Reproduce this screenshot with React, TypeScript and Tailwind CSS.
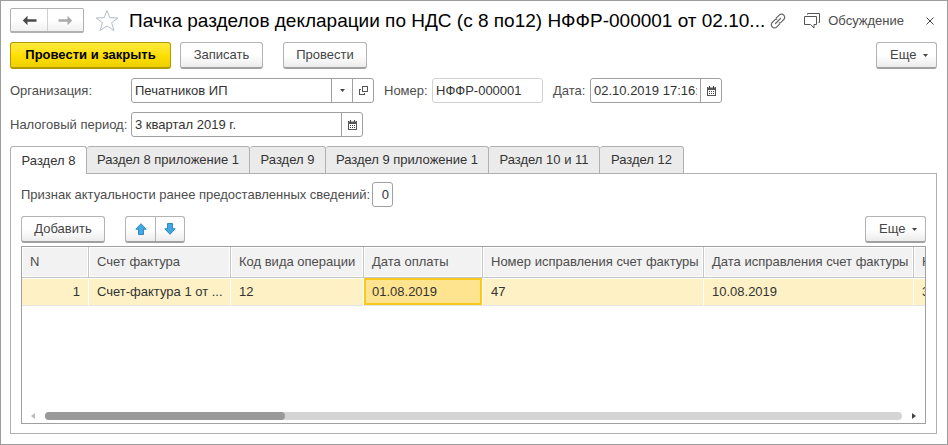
import { useState } from 'react';
import clsx from 'clsx';

type Column = {
  title: string;
  value: string;
  width: string;
};

const tabs = [
  { title: 'Раздел 8', width: 'w-[77px]' },
  { title: 'Раздел 8 приложение 1', width: 'w-[163px]' },
  { title: 'Раздел 9', width: 'w-[76px]' },
  { title: 'Раздел 9 приложение 1', width: 'w-[163px]' },
  { title: 'Раздел 10 и 11', width: 'w-[111px]' },
  { title: 'Раздел 12', width: 'w-[84px]' },
];

const columns: Column[] = [
  { title: 'N', value: '1', width: 'w-[67px]' },
  { title: 'Счет фактура', value: 'Счет-фактура 1 от ...', width: 'w-[142px]' },
  { title: 'Код вида операции', value: '12', width: 'w-[133px]' },
  { title: 'Дата оплаты', value: '01.08.2019', width: 'w-[119px]' },
  { title: 'Номер исправления счет фактуры', value: '47', width: 'w-[221px]' },
  { title: 'Дата исправления счет фактуры', value: '10.08.2019', width: 'w-[210px]' },
  { title: 'Н', value: '3', width: 'w-[120px]' },
];

const buttonClass =
  'h-[27px] rounded-[3px] border border-[#b3b3b3] border-b-2 border-b-[#a0a0a0] bg-linear-to-b from-white from-50% to-[#ececec] text-[#444] whitespace-nowrap';

const fieldClass = 'flex h-[25px] shrink-0 overflow-hidden rounded-[3px] border border-[#a0a0a0] bg-white';
const inputClass = 'min-w-0 flex-1 bg-transparent px-[3px] text-[#333] outline-none';
const fieldButtonClass = 'flex w-[21px] shrink-0 items-center justify-center border-l border-[#a0a0a0]';

const Caret = () => (
  <svg width="5" height="3" viewBox="0 0 5 3" fill="#444">
    <path d="M0 0h5L2.5 3z" />
  </svg>
);

const CalendarIcon = () => (
  <svg width="9" height="10" viewBox="0 0 9 10" shapeRendering="crispEdges">
    <path d="M0 1h9v9H0z" fill="#555" />
    <path d="M2 0h1v2H2zM6 0h1v2H6z" fill="#444" />
    <path d="M1 1h1v1H1zM3 1h3v1H3zM7 1h1v1H7z" fill="#aaa" />
    <path d="M1 4h7v5H1z" fill="#fff" />
    <path d="M2 5h1v1H2zM4 5h1v1H4zM6 5h1v1H6zM2 7h1v1H2zM4 7h1v1H4zM6 7h1v1H6z" fill="#444" />
  </svg>
);

const OpenIcon = () => (
  <svg width="9" height="9" viewBox="0 0 9 9" fill="#555" shapeRendering="crispEdges">
    <path d="M3 0h6v6H3zM4 1v4h4V1z" fillRule="evenodd" />
    <path d="M0 3h2v1H1v4h4V7h1v2H0z" />
  </svg>
);

const NavArrow = ({ back }: { back?: boolean }) => (
  <svg width="15" height="11" viewBox="0 0 15 11" className={back ? 'text-[#4a4a4a]' : 'rotate-180 text-[#aaa]'}>
    <path d="M5.500 .8L.8 5.500l4.700 4.700V6.800h9V4.200h-9z" fill="currentColor" />
  </svg>
);

const MoveArrow = ({ down }: { down?: boolean }) => (
  <svg width="12" height="12" viewBox="0 0 12 12" className={down ? 'rotate-180' : ''}>
    <path d="M6 .7l5.2 5.5H8.5v5.3h-5V6.2H.8z" fill="#3fa9e6" stroke="#3486bb" strokeLinejoin="round" />
  </svg>
);

const MoreButton = () => (
  <button type="button" className={clsx(buttonClass, 'ml-auto flex w-[61px] items-center gap-[7px] pl-[13px]')}>
    Еще
    <Caret />
  </button>
);

export default function App() {
  const [activeTab, setActiveTab] = useState(0);

  return (
    <main className="flex min-h-screen flex-col border border-[#9c9c9c] bg-white pt-[7px] pr-2.5 pb-2.5 pl-[9px] font-['Liberation_Sans',Arial,sans-serif] text-[13px] leading-4 text-[#4d4d4d]">
      <header className="flex h-[25px] items-center">
        <div className="flex h-[25px] shrink-0 rounded-[2px] border border-b-2 border-[#b0b0b0] bg-linear-to-b from-white from-50% to-[#f0f0f0]">
          <button type="button" aria-label="Назад" className="flex w-[36px] items-center justify-center">
            <NavArrow back />
          </button>
          <button type="button" aria-label="Вперед" className="flex w-[36px] items-center justify-center border-l border-[#d0d0d0]">
            <NavArrow />
          </button>
        </div>
        <button type="button" aria-label="В избранное" className="ml-[11px] shrink-0">
          <svg width="24" height="23" viewBox="0 0 24 23" fill="none" stroke="#b4bcc6">
            <path d="M12 1.5l2.8 7.2 8.2.3-6.4 4.7 2.4 7.8-7-4.5-7 4.5 2.4-7.8L1 9l8.2-.3z" />
          </svg>
        </button>
        <h1 className="ml-2.5 min-w-0 flex-1 text-[19px] leading-6 whitespace-nowrap text-black">
          Пачка разделов декларации по НДС (с 8 по12) НФФР-000001 от 02.10...
        </h1>
        <button type="button" aria-label="Получить ссылку" className="shrink-0">
          <svg width="16" height="16" viewBox="0 0 16 16" fill="none" stroke="#666" strokeWidth="1.2" strokeLinecap="round">
            <path d="M6.200 5.200l3-3a3 3 0 0 1 4.600 0 3 3 0 0 1 0 4.300l-2.600 2.600a3 3 0 0 1-2 .8" />
            <path d="M9.800 10.800l-3 3a3 3 0 0 1-4.600 0 3 3 0 0 1 0-4.300l2.600-2.600a3 3 0 0 1 2-.8" />
            <path d="M5.500 10.500l5-5" />
          </svg>
        </button>
        <a href="#discussion" className="ml-[18px] flex shrink-0 items-center gap-2">
          <svg width="16" height="16" viewBox="0 0 16 16" fill="none" stroke="#555">
            <path d="M3.500 1.500V.5h12v9h-1" />
            <path d="M.5 3.500h12v8H10v3.500l-3.500-3.500h-6z" />
          </svg>
          Обсуждение
        </a>
        <button type="button" aria-label="Закрыть" className="mr-[3px] ml-[22px] shrink-0">
          <svg width="8" height="8" viewBox="0 0 8 8" stroke="#444">
            <path d="M.5.5l7 7M7.5.5l-7 7" />
          </svg>
        </button>
      </header>

      <div className="mt-[9px] flex">
        <button
          type="button"
          className="h-[27px] w-[161px] rounded-[3px] border border-b-2 border-[#b09a00] bg-linear-to-b from-[#ffe93a] via-[#ffe000] to-[#efcf00] font-bold whitespace-nowrap text-black"
        >
          Провести и закрыть
        </button>
        <button type="button" className={clsx(buttonClass, 'ml-[9px] w-[83px]')}>
          Записать
        </button>
        <button type="button" className={clsx(buttonClass, 'ml-5 w-[84px]')}>
          Провести
        </button>
        <MoreButton />
      </div>

      <div className="mt-[9px] flex items-center">
        <label htmlFor="organization" className="w-[121px] shrink-0">
          Организация:
        </label>
        <div className={clsx(fieldClass, 'w-[243px]')}>
          <input id="organization" defaultValue="Печатников ИП" className={inputClass} />
          <button type="button" aria-label="Выбрать" className={fieldButtonClass}>
            <Caret />
          </button>
          <button type="button" aria-label="Открыть" className={fieldButtonClass}>
            <OpenIcon />
          </button>
        </div>
        <label htmlFor="number" className="ml-2.5 w-12 shrink-0">
          Номер:
        </label>
        <div className={clsx(fieldClass, 'w-[111px] border-[#d2d2d2]!')}>
          <input id="number" defaultValue="НФФР-000001" readOnly className={inputClass} />
        </div>
        <label htmlFor="date" className="ml-2.5 w-[37px] shrink-0">
          Дата:
        </label>
        <div className={clsx(fieldClass, 'w-[132px]')}>
          <input id="date" defaultValue="02.10.2019 17:16:" className={inputClass} />
          <button type="button" aria-label="Выбрать дату" className={fieldButtonClass}>
            <CalendarIcon />
          </button>
        </div>
      </div>

      <div className="mt-[9px] flex items-center">
        <label htmlFor="period" className="w-[121px] shrink-0 whitespace-nowrap">
          Налоговый период:
        </label>
        <div className={clsx(fieldClass, 'w-[232px]')}>
          <input id="period" defaultValue="3 квартал 2019 г." className={inputClass} />
          <button type="button" aria-label="Выбрать период" className={fieldButtonClass}>
            <CalendarIcon />
          </button>
        </div>
      </div>

      <div role="tablist" className="mt-[9px] flex">
        {tabs.map((tab, index) => (
          <button
            key={tab.title}
            type="button"
            role="tab"
            aria-selected={index === activeTab}
            onClick={() => setActiveTab(index)}
            className={clsx(
              tab.width,
              '-mb-px h-7 rounded-t-[3px] border-t border-r border-[#b0b0b0] whitespace-nowrap text-[#333]',
              index === 0 && 'border-l',
              index === activeTab ? 'z-10 bg-white' : 'border-b bg-[#ebebeb]',
            )}
          >
            {tab.title}
          </button>
        ))}
      </div>

      <section className="flex flex-1 flex-col border border-[#b0b0b0] px-2.5 pt-2 pb-[9px]">
        <div className="flex items-center">
          <label htmlFor="actuality" className="w-[351px] whitespace-nowrap">
            Признак актуальности ранее предоставленных сведений:
          </label>
          <div className={clsx(fieldClass, 'w-[21px]')}>
            <input id="actuality" defaultValue="0" className={clsx(inputClass, 'text-right')} />
          </div>
        </div>

        <div className="mt-[9px] flex">
          <button type="button" className={clsx(buttonClass, 'w-[84px]')}>
            Добавить
          </button>
          <div className={clsx(buttonClass, 'ml-5 flex')}>
            <button type="button" aria-label="Вверх" className="flex w-[29px] items-center justify-center">
              <MoveArrow />
            </button>
            <button type="button" aria-label="Вниз" className="flex w-[29px] items-center justify-center border-l border-[#b3b3b3]">
              <MoveArrow down />
            </button>
          </div>
          <MoreButton />
        </div>

        <div className="mt-[3px] flex flex-1 flex-col border border-[#a0a0a0]">
          <div className="overflow-hidden">
            <table className="w-[1012px] table-fixed border-separate border-spacing-0">
              <thead>
                <tr>
                  {columns.map((column) => (
                    <th
                      key={column.title}
                      className={clsx(
                        column.width,
                        'h-[31px] border-r border-b border-[#c6c6c6] bg-[#f2f2f2] px-2 text-left font-normal whitespace-nowrap shadow-[inset_0_0_0_1px_#fff]',
                      )}
                    >
                      {column.title}
                    </th>
                  ))}
                </tr>
              </thead>
              <tbody>
                <tr>
                  {columns.map((column, index) => (
                    <td
                      key={column.title}
                      className={clsx(
                        'h-7 border-r border-b border-r-white border-b-[#e4e4e4] px-2 whitespace-nowrap text-[#333]',
                        index === 0 && 'text-right',
                        index === 3
                          ? 'bg-[#ffe48f] shadow-[inset_0_0_0_2px_#f9c81e]'
                          : 'bg-[#fdf1c5] shadow-[inset_0_1px_0_#fff]',
                      )}
                    >
                      {column.value}
                    </td>
                  ))}
                </tr>
              </tbody>
            </table>
          </div>

          <div className="mt-auto flex items-center px-[9px] pb-[3px]">
            <svg width="4" height="6" viewBox="0 0 4 6" fill="#bbb">
              <path d="M4 0v6L0 3z" />
            </svg>
            <div className="mr-2.5 ml-2.5 h-2 flex-1 rounded-full bg-[#d4d4d4]">
              <div className="h-2 w-[28%] rounded-full bg-[#999]" />
            </div>
            <svg width="4" height="6" viewBox="0 0 4 6" fill="#444">
              <path d="M0 0v6l4-3z" />
            </svg>
          </div>
        </div>
      </section>
    </main>
  );
}
